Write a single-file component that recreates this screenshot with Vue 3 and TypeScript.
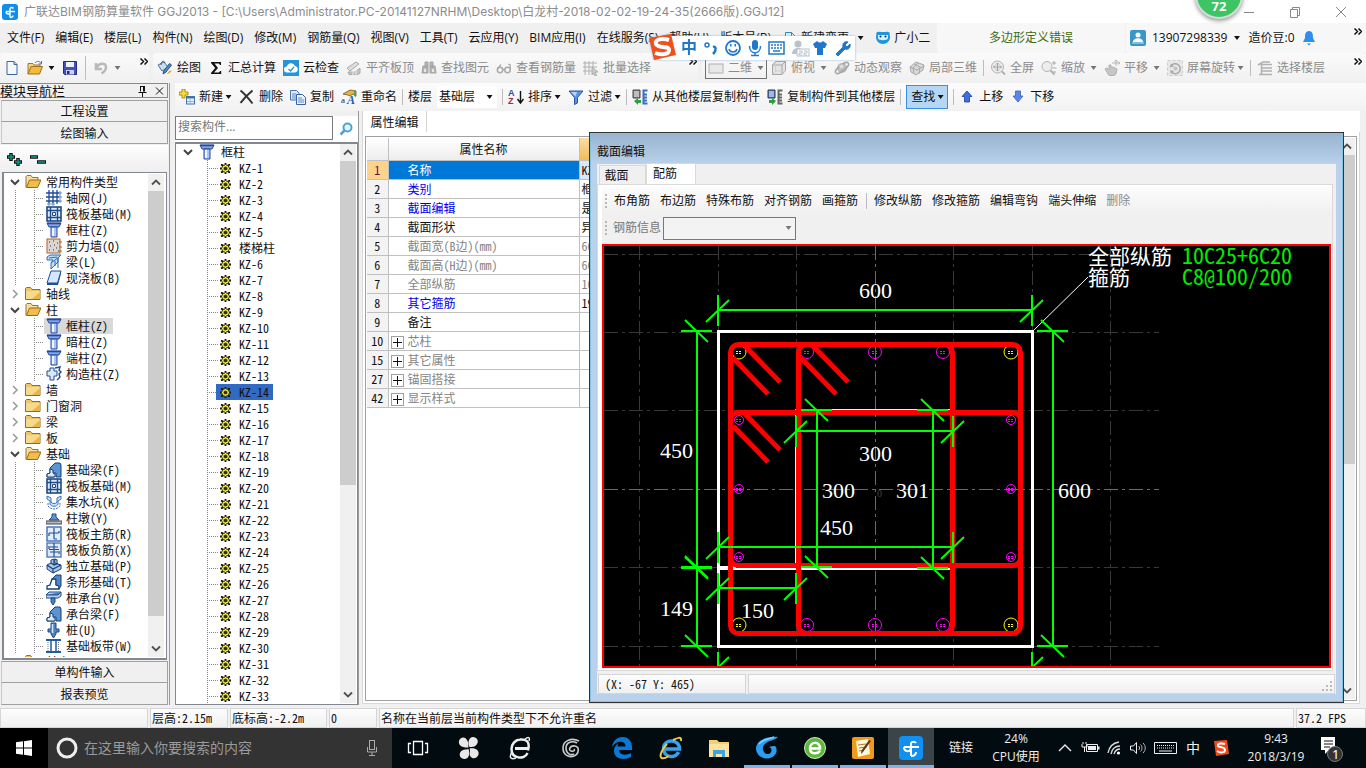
<script setup lang="ts">
import { ref } from 'vue'

interface Tool {
  text?: string
  icon?: string
  arrow?: boolean
  tight?: boolean
  off?: boolean
  sep?: boolean
}
interface TreeNode {
  text: string
  icon: string
  open?: boolean
  children?: { text: string; icon: string }[]
}
interface Prop {
  no: number
  name: string
  value: string
  kind: 'head' | 'blue' | 'black' | 'grey' | 'group'
}

const icons: Record<string, string> = {
  newFile: '<path d="M3 1.500h7l3 3v10H3z" fill="#f4f8fd" stroke="#3c6598"/><path d="M10 1.500v3h3" fill="#b9d0ea" stroke="#3c6598"/>',
  open: '<path d="M1 14V3.500h5l1 1.500h6V7" fill="#f6d57c" stroke="#a07828"/><path d="M1 14l3-7.500h11.500L12.500 14z" fill="#f3b93c" stroke="#9c7021"/><path d="M8 3c2-2.500 5-2 6 .5M14.500 1v3h-3" fill="none" stroke="#4d76a8"/>',
  save: '<path d="M1.500 1.500h13v13h-12l-1-1z" fill="#4650b8" stroke="#252c80"/><path d="M4 2h8v5H4z" fill="#eef2ff"/><path d="M4 10h8v4.500H4z" fill="#c9d2e8"/><path d="M5 11h2.500v3H5z" fill="#252c80"/>',
  undo: '<path d="M3 3v6h6M3.500 8.500C5 3 13 2 13 7c0 3-2 5-4.500 6.500" fill="none" stroke="#b9b9b9" stroke-width="2.500"/>',
  draw: '<path d="M1 5l6-3 4 5-6 4z" fill="#c9dcf0" stroke="#4b6f99"/><path d="M4 5c0-4 3-5 4-2" fill="none" stroke="#456"/><path d="M14.500 5L9 12l-3 2 1-3.500L12.500 3.500z" fill="#4c89d1" stroke="#244f8a"/><path d="M10 14c1.500-4 4-4 5-3-1 0-2 3-5 3z" fill="#f2a92d"/>',
  sigma: '<path d="M3 2h10v3h-1l-1-1.500H6.500L10 8l-4 4.500h5L12.200 11h1v3H3v-1l4.200-5L3 3z" fill="#111"/>',
  cloud: '<rect width="16" height="16" fill="#2594db"/><path d="M4 12.500a3 3 0 0 1 0-6 4.200 4.200 0 0 1 8-.5 3.300 3.300 0 0 1 0 6.500z" fill="#fff"/><path d="M5.500 9l2 2 3.500-4" fill="none" stroke="#2594db" stroke-width="1.300"/>',
  flush: '<path d="M1 8l9-6 3 2-9 7z" fill="#ddd" stroke="#aaa"/><path d="M2 12h7l5-4v5l-2 1.500H3z" fill="#c4c4c4" stroke="#aaa"/><path d="M7 15v-4M10 15v-5" stroke="#eee"/>',
  binoc: '<path d="M4 2h3v5H4zM9 2h3v5H9zM2 6h5v7H1zM9 6h5l1 7H9z" fill="#b5b5b5" stroke="#a2a2a2"/><path d="M7 5h2v4H7z" fill="#c9c9c9"/><path d="M3 9h2v3H3zM11 9h2v3h-2z" fill="#e6e6e6"/>',
  glasses: '<circle cx="4" cy="10" r="2.700" fill="none" stroke="#aaa" stroke-width="1.500"/><circle cx="11.500" cy="10" r="2.700" fill="none" stroke="#aaa" stroke-width="1.500"/><path d="M6.500 9.500h2.500M1.500 9L5 4.500M14.200 9V5l-2-1" fill="none" stroke="#aaa" stroke-width="1.300"/>',
  batch: '<path d="M2 1v14M6 1v14M10 1v9M0 3h14M0 7h14M0 11h9" stroke="#b0b0b0"/><path d="M9 7l6 5-3 .3 1.500 3-1.500.7-1.500-3L9 15z" fill="#c8c8c8" stroke="#a4a4a4" stroke-width=".8"/>',
  rect2d: '<rect x="1" y="4" width="14" height="9" fill="#e8e8e8" stroke="#b0b0b0"/><path d="M2 12.500h12.500" stroke="#ccc"/>',
  cube: '<path d="M1.500 5l3-3.500h10v9l-3.500 4H1.500z" fill="#e4e4e4" stroke="#a5a5a5"/><path d="M1.500 5H11v9.500M11 5l3.500-3.500" fill="none" stroke="#a5a5a5"/><path d="M4.500 2v9M4.500 11L2 14M4.500 11h10" stroke="#cfcfcf"/>',
  orbit: '<circle cx="8" cy="8" r="5" fill="#bcbcbc"/><ellipse cx="8" cy="8" rx="8" ry="3" transform="rotate(-38 8 8)" fill="none" stroke="#a5a5a5" stroke-width="1.400"/><path d="M5 6l3-2 2 3-3 2z" fill="#ddd"/>',
  local3d: '<path d="M1 7l6-5 8 3-1 5-7 5-5-3z" fill="#d8d8d8" stroke="#a9a9a9"/><path d="M5 4l6 3-1 7M9 3L4 8l1 5M1 7l7 3 7-4" fill="none" stroke="#aaa"/>',
  full: '<circle cx="7.500" cy="7" r="6" fill="#ececec" stroke="#b3b3b3"/><path d="M7.500 3v8M3.500 7h8M6 4.500L7.500 3 9 4.500M6 9.500L7.500 11 9 9.500M5 5.500L3.500 7 5 8.500M10 5.500L11.500 7 10 8.500" fill="none" stroke="#a2a2a2"/><path d="M12 11.500l3 3" stroke="#b0b0b0" stroke-width="2"/>',
  zoom: '<circle cx="6" cy="6.500" r="5" fill="#ededed" stroke="#b3b3b3"/><path d="M9.500 10.500l4 4" stroke="#b0b0b0" stroke-width="2"/><path d="M11 3h4M13 1v4M11.500 8h4M12 12h3" stroke="#aaa"/>',
  pan: '<path d="M1 9l2-1 2 2V5h2v3l2-1 2 1 2 1-1 5-2 1.500H5z" fill="#c6c6c6" stroke="#b0b0b0"/><path d="M8 3h8M12 0v6M10.500 1.500L12 0l1.500 1.500M14.500 1.500L16 3l-1.500 1.500" fill="none" stroke="#b5b5b5"/>',
  rotate: '<rect x=".5" y=".5" width="15" height="15" fill="#e8e8e8" stroke="#ccc" stroke-dasharray="3 2"/><path d="M4 6a5 5 0 1 1 1 6.500" fill="none" stroke="#a9a9a9" stroke-width="1.500"/><path d="M2.500 7.500L4 3.500l3 3zM7 11l-3 3-1-4z" fill="#aaa"/><circle cx="8.500" cy="8.500" r="2" fill="#c2c2c2"/>',
  floors: '<path d="M1 5l5-3h7M5 4.500h10M5 8h10M5 11h10M2 14.500h13M4.500 4v10" fill="none" stroke="#b0b0b0" stroke-width="1.500"/>',
  addNew: '<path d="M3 0h3v3h3v3H6v3H3V6H0V3h3z" fill="#f8dc3c" stroke="#8f7a12" stroke-width=".8"/><rect x="7.500" y="7.500" width="8" height="7.500" fill="#e6f0fb" stroke="#4472a8"/><path d="M7.500 8.500h8" stroke="#4472a8" stroke-width="2"/><path d="M8 12.500h7M11 10v5" stroke="#9ab6d6"/>',
  cross: '<path d="M1.500 1.500C6 5 10 10 13.500 14.500M13.500 1.500C8 6 5 9 1.500 14" fill="none" stroke="#333" stroke-width="2"/>',
  copy: '<path d="M.5 1.500h6l2.500 2.500v7H.5z" fill="#dce9f8" stroke="#4672b0"/><path d="M6.500 5.500h6l3 3v7h-9z" fill="#e9f2fc" stroke="#3561a5"/><path d="M8 9h4M8 11h6M8 13h6M2 5h4M2 7h4M2 9h4" stroke="#5e8ac4"/>',
  rename: '<path d="M2 5l7-4 6 1v5l-3-2-3 2-2-1z" fill="#e9b43c" stroke="#6b5619" stroke-width=".8"/><path d="M15 1v7l-2-1V2z" fill="#5a9d4a"/><text x="0" y="14" font-size="9" fill="#222" font-family="Liberation Serif">a</text><text x="6" y="15" font-size="12" font-style="italic" font-weight="bold" fill="#2458b8" font-family="Liberation Serif">A</text>',
  sort: '<text x="0" y="7" font-size="9" font-weight="bold" fill="#2a4fa8" font-family="Liberation Sans">A</text><text x="0" y="15" font-size="9" font-weight="bold" fill="#a02850" font-family="Liberation Sans">Z</text><path d="M12.500 2v11M9.500 10l3 4 3-4" fill="none" stroke="#111" stroke-width="1.400"/>',
  filter: '<path d="M1 2h14L9.500 8.500V14l-3 1.500v-7z" fill="#5a93e0" stroke="#2a56a8"/><path d="M3 3h6L7.500 7.500z" fill="#b5d2f6"/>',
  fromFloor: '<path d="M1 1h7v8H1z" fill="#8c8c8c" stroke="#444"/><path d="M2 3h5M2 5h5M2 7h5" stroke="#eee"/><path d="M15.500 1.500h-4v13h4M12 5.500h3M12 8.500h3M12 11.500h3" fill="none" stroke="#3a6fc0" stroke-width="2"/><path d="M2 12l4-3v2h3v3H6v2z" fill="#2f9e3c"/>',
  toFloor: '<path d="M1 1h7v8H1z" fill="#4f84c8" stroke="#334"/><path d="M2 3h5M2 5h5M2 7h5" stroke="#eef"/><path d="M15.500 1.500h-4v13h4M12 5.500h3M12 8.500h3M12 11.500h3" fill="none" stroke="#666" stroke-width="2"/><path d="M9 12l-4-3v2H2v3h3v2z" fill="#2f9e3c"/>',
  up: '<path d="M8 2l5 5.500h-2.500V13h-5V7.500H3z" fill="#3c6fe0" stroke="#1f3f9c" stroke-width=".8"/>',
  down: '<path d="M5.500 2h5v5H13l-5 6-5-6h2.500z" fill="#5b88e8" stroke="#3c5fc0" stroke-width=".8"/>',
  folder: '<path d="M.5 13.500v-11l1-1h4l1.500 2h8v10z" fill="#f0c666" stroke="#8d6d2b"/><path d="M1 5h14v8H1z" fill="#f6d98c"/><path d="M7 13l8-7v7z" fill="#eab545"/>',
  folderOpen: '<path d="M1 13.500V2.500l1-1h4l1.500 2H13V6" fill="#f6dfa0" stroke="#96722a"/><path d="M1.500 13.500L4.500 6H16l-3.500 7.500z" fill="#f2bd4c" stroke="#94691c"/>',
  axis: '<path d="M3 0v14M7 0v14M11 0v14M0 3h13M0 7h13M0 11h13" stroke="#1f4b9b" stroke-width="1.300"/><path d="M13 2h2v2h-2zM13 6h2v2h-2zM13 10h2v2h-2zM2 13h2v2H2zM6 13h2v2H6z" fill="#fff" stroke="#3c6fc0" stroke-width=".8"/>',
  raft: '<rect x="1" y="1" width="14" height="14" fill="#dfeafa" stroke="#123f77" stroke-width="1.500"/><path d="M4.500 1v14M11.500 1v14M1 4.500h14M1 11.500h14" stroke="#1b4d8c" stroke-width="1.400"/><path d="M6.500 6.500h3v3h-3z" fill="#fff" stroke="#1b4d8c"/>',
  column: '<path d="M1 1h14l-2 4H3z" fill="#7fa6e8" stroke="#24489c"/><path d="M1 1.500h14" stroke="#24489c" stroke-width="1.500"/><path d="M5 5h6v10H5z" fill="#a9c5f4" stroke="#24489c"/><path d="M6 6h2v8H6z" fill="#eef5ff"/>',
  wall: '<rect x="1" y="1" width="13" height="14" fill="#ddd6d0" stroke="#b0602a"/><path d="M3 4h1M7 3h1M11 5h1M4 8h1M8 7h1M10 10h1M3 12h1M7 12h1M12 13h1" stroke="#333" stroke-width="1.200"/><path d="M13 4h3M13 9h3M13 13h3" stroke="#b0602a"/>',
  beam: '<path d="M1 3l3-2h11l-3 3v4l-7 7V9l2-3H1z" fill="#c7e0f8" stroke="#2a6bb5"/><path d="M3 4l8-1M5 9l8-6M9 12V7M12 14V4" stroke="#2a6bb5"/>',
  slab: '<path d="M5 1h10l-3.500 12H1z" fill="#d6e6fb" stroke="#1c4fa0"/><path d="M1 13h10.500L15 1v2.500L12 15H1z" fill="#1c4fa0"/>',
  struct: '<path d="M4 2h4v3h3v5H8v4H4v-4H1V5h3z" fill="#d9e7fb" stroke="#234c8f"/><path d="M9 2l5-1-1 3 2 2-2 2 1 3-3 3" fill="none" stroke="#234c8f" stroke-width="1.400"/>',
  fbeam: '<path d="M1 15v-3l3-1V6l5-5h5l1 2v12h-5v-4H8v4z" fill="#5b94d2" stroke="#163f74"/><path d="M1 15v-3l3-1V7l3 1v3l2 1v3z" fill="#d8e8fa" stroke="#163f74"/>',
  pit: '<path d="M1 2v3l3 2v3c1 3 7 3 8 0V7l3-2V2l-4 2v4c-1 2-5 2-6 0V4z" fill="#cfe2f7" stroke="#3a72b8"/><path d="M2 9v3c3 4 9 4 12 0V9" fill="none" stroke="#3a72b8" stroke-dasharray="2 1"/>',
  pier: '<path d="M6 4h4v3l3 3H3l3-3z" fill="#5f93d6" stroke="#204a88"/><path d="M0 11h16v3H0z" fill="#b8b8b8" stroke="#444"/>',
  mainBar: '<rect x="1" y="1" width="14" height="14" fill="#e2eefc" stroke="#2f66b8" stroke-width="1.300"/><path d="M8 2v11M3 7h10M3 7v3M13 7V5M8 13h3" fill="none" stroke="#1f4f9e" stroke-width="1.200"/>',
  negBar: '<rect x="1" y="1" width="14" height="14" fill="#dfe9f6" stroke="#4a6fa8" stroke-width="1.300"/><path d="M8 1v14M4 5h8M4 10h8M3 4v3M13 9v3M3 7.500h10" fill="none" stroke="#1f4f9e" stroke-width="1.200"/>',
  isolated: '<path d="M1 7l4-2V2l4-1v4l6 2v4l-8 4-6-4z" fill="#a7c6ea" stroke="#163f74"/><path d="M1 7l6 4 8-4M7 11v4M5 5l3 2V2M9 1l2 1v4l-3 1" fill="none" stroke="#163f74" stroke-width="1.200"/>',
  strip: '<path d="M1 15v-3l3-1 2-6h4v6l3 1v3z" fill="#fff" stroke="#163f74" stroke-width="1.300"/><path d="M6 5l4-4h5v11l-2 3v-3l-3-1V5z" fill="#4f86c6" stroke="#163f74"/>',
  cap: '<path d="M0 5l3-3h12v4l-3 2H0z" fill="#b7d2f0" stroke="#1b4a86"/><path d="M0 5h12l3-3M5 8h4v4l-2 3-2-3z" fill="#4e80c0" stroke="#1b4a86"/>',
  pile: '<path d="M5 1h5v6h3v3h-3v2l-2.500 4L5 12v-2H2V7h3z" fill="#4f83c4" stroke="#1b4a86"/><path d="M6.500 2v9" stroke="#d8e8fa" stroke-width="1.500"/>',
  band: '<path d="M0 2h15M0 14h15" stroke="#1f5aa8" stroke-width="1.800"/><path d="M5 2v12M10 2v12" stroke="#1f5aa8" stroke-width="1.500"/><path d="M2 4v9M12.500 4v9" stroke="#777" stroke-dasharray="1 1"/>',
  gear: '<path d="M5 0h2v2h2V1h2v2h-1v2h2v2h-2v2h1v2H9v-1H7v2H5v-2H3v1H1V9h1V7H0V5h2V3H1V1h2v1h2z" fill="#111"/><path d="M5 2h2v2H5zM5 8h2v2H5zM2 5h2v2H2zM8 5h2v2H8zM3 3h2v2H3zM7 3h2v2H7zM3 7h2v2H3zM7 7h2v2H7z" fill="#f3ec2c"/><path d="M5 5h2v2H5z" fill="#333"/>',
}

const menus = ['文件(F)', '编辑(E)', '楼层(L)', '构件(N)', '绘图(D)', '修改(M)', '钢筋量(Q)', '视图(V)', '工具(T)', '云应用(Y)', 'BIM应用(I)', '在线服务(S)', '帮助(H)', '版本号(B)']

const drawTools: Tool[] = [
  { text: '绘图', icon: 'draw' },
  { text: '汇总计算', icon: 'sigma' },
  { text: '云检查', icon: 'cloud' },
  { text: '平齐板顶', icon: 'flush', off: true },
  { text: '查找图元', icon: 'binoc', off: true },
  { text: '查看钢筋量', icon: 'glasses', off: true },
  { text: '批量选择', icon: 'batch', off: true },
]
const viewTools: Tool[] = [
  { text: '俯视', icon: 'cube', arrow: true, off: true },
  { text: '动态观察', icon: 'orbit', off: true },
  { text: '局部三维', icon: 'local3d', off: true },
  { sep: true },
  { text: '全屏', icon: 'full', off: true },
  { text: '缩放', icon: 'zoom', arrow: true, off: true },
  { text: '平移', icon: 'pan', arrow: true, off: true },
  { text: '屏幕旋转', icon: 'rotate', arrow: true, tight: true, off: true },
  { sep: true },
  { text: '选择楼层', icon: 'floors', off: true },
]
const editTools: Tool[] = [
  { text: '新建', icon: 'addNew', arrow: true, tight: true },
  { text: '删除', icon: 'cross' },
  { text: '复制', icon: 'copy' },
  { text: '重命名', icon: 'rename' },
  { sep: true },
]
const orderTools: Tool[] = [
  { sep: true },
  { text: '排序', icon: 'sort', arrow: true, tight: true },
  { text: '过滤', icon: 'filter', arrow: true, tight: true },
  { sep: true },
  { text: '从其他楼层复制构件', icon: 'fromFloor' },
  { text: '复制构件到其他楼层', icon: 'toFloor' },
  { sep: true },
]
const moveTools: Tool[] = [
  { sep: true },
  { text: '上移', icon: 'up' },
  { text: '下移', icon: 'down' },
]

const tree: TreeNode[] = [
  {
    text: '常用构件类型', icon: 'folderOpen', open: true,
    children: [
      { text: '轴网(J)', icon: 'axis' },
      { text: '筏板基础(M)', icon: 'raft' },
      { text: '框柱(Z)', icon: 'column' },
      { text: '剪力墙(Q)', icon: 'wall' },
      { text: '梁(L)', icon: 'beam' },
      { text: '现浇板(B)', icon: 'slab' },
    ],
  },
  { text: '轴线', icon: 'folder' },
  {
    text: '柱', icon: 'folderOpen', open: true,
    children: [
      { text: '框柱(Z)', icon: 'column' },
      { text: '暗柱(Z)', icon: 'column' },
      { text: '端柱(Z)', icon: 'column' },
      { text: '构造柱(Z)', icon: 'struct' },
    ],
  },
  { text: '墙', icon: 'folder' },
  { text: '门窗洞', icon: 'folder' },
  { text: '梁', icon: 'folder' },
  { text: '板', icon: 'folder' },
  {
    text: '基础', icon: 'folderOpen', open: true,
    children: [
      { text: '基础梁(F)', icon: 'fbeam' },
      { text: '筏板基础(M)', icon: 'raft' },
      { text: '集水坑(K)', icon: 'pit' },
      { text: '柱墩(Y)', icon: 'pier' },
      { text: '筏板主筋(R)', icon: 'mainBar' },
      { text: '筏板负筋(X)', icon: 'negBar' },
      { text: '独立基础(P)', icon: 'isolated' },
      { text: '条形基础(T)', icon: 'strip' },
      { text: '桩承台(V)', icon: 'cap' },
      { text: '承台梁(F)', icon: 'fbeam' },
      { text: '桩(U)', icon: 'pile' },
      { text: '基础板带(W)', icon: 'band' },
    ],
  },
  { text: '其它', icon: 'folder' },
]

const range = (from: number, to: number) => Array.from({ length: to - from + 1 }, (_, i) => `KZ-${from + i}`)
const members = [...range(1, 5), '楼梯柱', ...range(6, 33)]
const current = ref('KZ-14')
const keyword = ref('')

const props: Prop[] = [
  { no: 1, name: '名称', value: 'KZ-14', kind: 'head' },
  { no: 2, name: '类别', value: '框架柱', kind: 'blue' },
  { no: 3, name: '截面编辑', value: '是', kind: 'blue' },
  { no: 4, name: '截面形状', value: '异形', kind: 'black' },
  { no: 5, name: '截面宽(B边)(mm)', value: '600', kind: 'grey' },
  { no: 6, name: '截面高(H边)(mm)', value: '600', kind: 'grey' },
  { no: 7, name: '全部纵筋', value: '10', kind: 'grey' },
  { no: 8, name: '其它箍筋', value: '195', kind: 'blue' },
  { no: 9, name: '备注', value: '', kind: 'black' },
  { no: 10, name: '芯柱', value: '', kind: 'group' },
  { no: 15, name: '其它属性', value: '', kind: 'group' },
  { no: 27, name: '锚固搭接', value: '', kind: 'group' },
  { no: 42, name: '显示样式', value: '', kind: 'group' },
]

const barToolsA = ['布角筋', '布边筋', '特殊布筋', '对齐钢筋', '画箍筋']
const barToolsB = ['修改纵筋', '修改箍筋', '编辑弯钩', '端头伸缩']

/* Section drawing */
const gridX = [639, 718, 796, 953, 1032, 1110]
const gridY = [254, 332, 410, 567, 646]
const rebars = [
  { r: 7, color: '#ffff00', at: [[739, 352], [1011, 352], [739, 625], [1011, 625]] },
  { r: 6.5, color: '#ff00ff', at: [[807, 352], [875, 352], [943, 352], [807, 625], [875, 625], [943, 625]] },
  { r: 4.5, color: '#ff00ff', at: [[739, 420], [739, 489], [739, 557], [1011, 420], [1011, 489], [1011, 557]] },
]
const mark = (x: number, y: number) => `M${x - 3} ${y - 0.5}h2m1 0h2M${x - 3} ${y + 1.5}h2m1 0h2`
const hooks = [[0, 0], [68, 0], [0, 68]]

const hDim = (x1: number, x2: number, y: number) =>
  `M${x1} ${y}H${x2}` + [x1, x2].map(x => `M${x} ${y - 15}v31M${x - 12} ${y + 12}l23 -22`).join('')
const vDim = (y1: number, y2: number, x: number) =>
  `M${x} ${y1}V${y2}` + [y1, y2].map(y => `M${x - 16} ${y}h31M${x - 12} ${y - 11}l23 22`).join('')
const dims = [
  hDim(718, 1032, 310), hDim(796, 953, 431), hDim(718, 953, 547), hDim(718, 796, 588), hDim(718, 1032, 667),
  vDim(331, 567, 697), vDim(568, 646, 697), vDim(331, 646, 1053), vDim(410, 567, 817), vDim(410, 568, 933),
]
const dimTexts: [number, number, string][] = [
  [859, 298, '600'], [660, 458, '450'], [859, 461, '300'], [822, 498, '300'], [896, 498, '301'],
  [820, 535, '450'], [660, 616, '149'], [741, 618, '150'], [1058, 498, '600'],
]
</script>

<template>
  <div class="app">
    <header class="title">
      <svg class="logo" viewBox="0 0 16 16"><rect width="16" height="16" rx="3" fill="#0d8eea" /><path d="M8 13.500V4.500a2 2 0 0 1 3.500 0M4 7.500h9M4 7.500c0 3 4 3.500 4 .5M8 13.500c2 0 3-1 3-2" fill="none" stroke="#fff" stroke-width="1.400" /></svg>
      <h1>广联达BIM钢筋算量软件 GGJ2013 - [C:\Users\Administrator.PC-20141127NRHM\Desktop\白龙村-2018-02-02-19-24-35(2666版).GGJ12]</h1>
      <div class="winctl">
        <button type="button" aria-label="最小化"><svg viewBox="0 0 12 12"><path d="M1 6.500h10" stroke="#888" /></svg></button>
        <button type="button" aria-label="还原"><svg viewBox="0 0 12 12"><path d="M1.500 3.500h7v8h-7zM3.500 3.500v-2h7v8h-2" fill="none" stroke="#888" /></svg></button>
        <button type="button" aria-label="关闭"><svg viewBox="0 0 12 12"><path d="M1 1l10 10M11 1L1 11" stroke="#888" /></svg></button>
      </div>
    </header>

    <nav class="menubar">
      <div class="menus">
        <button v-for="m in menus" :key="m" type="button">{{ m }}</button>
        <button type="button" class="withicon"><svg class="ic" viewBox="0 0 16 16"><path d="M3.500 2.500h6l4 4v8h-10z" fill="#e3f1fb" stroke="#2e86c1" /><path d="M9.500 2.500v4h4" fill="none" stroke="#2e86c1" /></svg>新建变更<i class="caret wide"></i></button>
        <button type="button" class="withicon"><svg class="ic" viewBox="0 0 16 16"><path d="M1 3c2-2 4-1 7-1s5-1 7 1c-1 1 0 2 0 4 0 4-3 7-7 7S1 11 1 7c0-2 1-3 0-4z" fill="#1d95e0" /><path d="M3 5h10v3c0 3-10 3-10 0z" fill="#d7effc" /><circle cx="5.500" cy="6.500" r="1" fill="#134" /><circle cx="10.500" cy="6.500" r="1" fill="#134" /></svg>广小二</button>
      </div>
      <div class="notice">多边形定义错误</div>
      <div class="account">
        <svg class="ic" viewBox="0 0 16 16"><rect width="16" height="16" rx="2" fill="#3a96c9" /><circle cx="8" cy="5" r="2.500" fill="#fff" /><path d="M3 12c0-5 10-5 10 0z" fill="#fff" /><path d="M2 13h12" stroke="#cfe8f5" /></svg>
        <button type="button">13907298339</button><i class="caret"></i>
        <button type="button" class="bean">造价豆:0</button>
        <svg class="ic" viewBox="0 0 16 16"><path d="M8 1c4 0 4 4 4 7l2 4H2l2-4c0-3 0-7 4-7z" fill="#2e8ff0" /><path d="M6 13.500h4L8 15.500z" fill="#2e8ff0" /></svg>
        <svg class="more" viewBox="0 0 8 7"><path d="M.5.5l3 3-3 3M4.500.5l3 3-3 3" /></svg>
      </div>
    </nav>

    <div class="toolbar main">
      <div class="seg files">
        <button type="button" aria-label="新建工程"><svg class="ic" viewBox="0 0 16 16" v-html="icons.newFile"></svg></button>
        <button type="button" aria-label="打开"><svg class="ic" viewBox="0 0 16 16" v-html="icons.open"></svg><i class="caret"></i></button>
        <button type="button" aria-label="保存"><svg class="ic" viewBox="0 0 16 16" v-html="icons.save"></svg></button>
        <span class="sep tall"></span>
        <button type="button" class="off" aria-label="撤销"><svg class="ic" viewBox="0 0 16 16" v-html="icons.undo"></svg><i class="caret"></i></button>
        <svg class="more" viewBox="0 0 8 7"><path d="M.5.5l3 3-3 3M4.500.5l3 3-3 3" /></svg>
      </div>
      <div class="seg draws">
        <button v-for="t in drawTools" :key="t.text" type="button" class="tool" :class="{ off: t.off }"><svg class="ic" viewBox="0 0 16 16" v-html="icons[t.icon!]"></svg>{{ t.text }}</button>
        <svg class="more" viewBox="0 0 8 7"><path d="M.5.5l3 3-3 3M4.500.5l3 3-3 3" /></svg>
      </div>
      <div class="seg views">
        <button type="button" class="tool off dim2"><svg class="ic" viewBox="0 0 16 16" v-html="icons.rect2d"></svg>二维<i class="caret"></i></button>
        <template v-for="(t, i) in viewTools" :key="i">
          <span v-if="t.sep" class="sep"></span>
          <button v-else type="button" class="tool" :class="{ off: t.off, tight: t.tight }"><svg class="ic" viewBox="0 0 16 16" v-html="icons[t.icon!]"></svg>{{ t.text }}<i v-if="t.arrow" class="caret"></i></button>
        </template>
        <svg class="more" viewBox="0 0 8 7"><path d="M.5.5l3 3-3 3M4.500.5l3 3-3 3" /></svg>
      </div>
    </div>

    <div class="body">
      <aside class="nav">
        <div class="navhead">
          <span>模块导航栏</span>
          <svg viewBox="0 0 30 12"><path d="M3 1.500h5M3.500 1.500v5M7.500 1.500v5M6.500 1.500v5M1.500 7.500h8M5.500 8v4" stroke="#111" fill="none" /><path d="M19 2.500l7 7M26 2.500l-7 7" stroke="#111" /></svg>
        </div>
        <button type="button" class="mod">工程设置</button>
        <button type="button" class="mod">绘图输入</button>
        <div class="pm">
          <svg viewBox="0 0 40 16"><path d="M5 1v8M1 5h8M12 6v8M8 10h8M24 5h8M31 10h9" stroke="#111" stroke-width="3.500" /><path d="M5 2v6M2 5h6M12 7v6M9 10h6M25 5h6M32 10h7" stroke="#0b9a8d" stroke-width="1.500" /></svg>
        </div>
        <div class="treebox">
          <ul class="tree" role="tree">
            <li v-for="n in tree" :key="n.text" role="treeitem">
              <div class="node">
                <svg class="chev" viewBox="0 0 10 10"><path v-if="n.open" d="M1 3l4 4 4-4" stroke="#444" stroke-width="2" fill="none" /><path v-else d="M3 1l4 4-4 4" stroke="#999" stroke-width="1.500" fill="none" /></svg>
                <svg class="ic" viewBox="0 0 16 16" v-html="icons[n.icon]"></svg><span>{{ n.text }}</span>
              </div>
              <ul v-if="n.children" role="group">
                <li v-for="c in n.children" :key="c.text" class="leaf" role="treeitem">
                  <div class="pick" :class="{ on: n.text === '柱' && c.text === '框柱(Z)' }"><svg class="ic" viewBox="0 0 16 16" v-html="icons[c.icon]"></svg><span>{{ c.text }}</span></div>
                </li>
              </ul>
            </li>
          </ul>
          <div class="sb"><svg viewBox="0 0 10 10"><path d="M1 7l4-4 4 4" /></svg><i class="t1"></i><svg viewBox="0 0 10 10"><path d="M1 3l4 4 4-4" /></svg></div>
        </div>
        <button type="button" class="mod">单构件输入</button>
        <button type="button" class="mod">报表预览</button>
      </aside>

      <div class="work">
        <div class="toolbar edit">
          <template v-for="(t, i) in editTools" :key="i">
            <span v-if="t.sep" class="sep"></span>
            <button v-else type="button" class="tool" :class="{ tight: t.tight }"><svg class="ic" viewBox="0 0 16 16" v-html="icons[t.icon!]"></svg>{{ t.text }}<i v-if="t.arrow" class="caret"></i></button>
          </template>
          <label class="floor">楼层<span class="selwrap"><select><option>基础层</option></select><i class="caret"></i></span></label>
          <template v-for="(t, i) in orderTools" :key="i">
            <span v-if="t.sep" class="sep"></span>
            <button v-else type="button" class="tool" :class="{ tight: t.tight }"><svg class="ic" viewBox="0 0 16 16" v-html="icons[t.icon!]"></svg>{{ t.text }}<i v-if="t.arrow" class="caret"></i></button>
          </template>
          <button type="button" class="tool tight find">查找<i class="caret"></i></button>
          <template v-for="(t, i) in moveTools" :key="i">
            <span v-if="t.sep" class="sep"></span>
            <button v-else type="button" class="tool"><svg class="ic" viewBox="0 0 16 16" v-html="icons[t.icon!]"></svg>{{ t.text }}</button>
          </template>
        </div>

        <div class="panes">
          <section class="members">
            <div class="search">
              <input v-model="keyword" type="text" placeholder="搜索构件..." aria-label="搜索构件">
              <button type="button" aria-label="搜索"><svg viewBox="0 0 14 14"><circle cx="8.500" cy="5.500" r="4" fill="#e8f6ff" stroke="#4aa3e0" stroke-width="2" /><path d="M5.500 8.500L1.500 12.500" stroke="#4aa3e0" stroke-width="2.500" /></svg></button>
            </div>
            <div class="listbox">
              <ul class="list" role="tree">
                <li class="root"><svg class="chev" viewBox="0 0 10 10"><path d="M1 3l4 4 4-4" stroke="#444" stroke-width="2" fill="none" /></svg><svg class="ic" viewBox="0 0 16 16" v-html="icons.column"></svg><span>框柱</span></li>
                <li v-for="m in members" :key="m" class="kz" role="treeitem" @click="current = m">
                  <div class="kzpick" :class="{ on: m === current }"><svg class="gear" viewBox="0 0 12 12" v-html="icons.gear"></svg><span>{{ m }}</span></div>
                </li>
              </ul>
              <div class="sb"><svg viewBox="0 0 10 10"><path d="M1 7l4-4 4 4" /></svg><i class="t2"></i><svg viewBox="0 0 10 10"><path d="M1 3l4 4 4-4" /></svg></div>
            </div>
          </section>

          <section class="props">
            <div class="tabs"><button type="button" class="tab">属性编辑</button></div>
            <div class="sheet">
              <div class="tablewrap">
                <table>
                  <colgroup><col class="c1"><col class="c2"><col></colgroup>
                  <thead><tr><th></th><th>属性名称</th><th class="val"></th></tr></thead>
                  <tbody>
                    <tr v-for="p in props" :key="p.no" :class="p.kind">
                      <th scope="row">{{ p.no }}</th>
                      <td><button v-if="p.kind === 'group'" type="button" class="plus" :aria-label="'展开' + p.name"><svg viewBox="0 0 9 9"><path d="M0 4.500h9M4.500 0v9" stroke="#111" /></svg></button>{{ p.name }}</td>
                      <td>{{ p.value }}</td>
                    </tr>
                  </tbody>
                </table>
                <div class="sb"><svg viewBox="0 0 10 10"><path d="M1 7l4-4 4 4" /></svg><i class="t3"></i><svg viewBox="0 0 10 10"><path d="M1 3l4 4 4-4" /></svg></div>
              </div>
            </div>
          </section>
        </div>
      </div>
    </div>

    <footer class="status">
      <span class="s1"></span><span class="s2">层高:2.15m</span><span class="s3">底标高:-2.2m</span><span class="s4">0</span><span class="s5">名称在当前层当前构件类型下不允许重名</span><span class="s6">37.2 FPS</span>
    </footer>

    <div class="taskbar">
      <button type="button" class="start" aria-label="开始"><svg viewBox="0 0 16 16"><path d="M0 2.300L7 1.300v6.200H0zM8 1.200L16 0v7.500H8zM0 8.500h7v6.200l-7-1zM8 8.500h8V16l-8-1.200z" fill="#fff" /></svg></button>
      <label class="cortana">
        <svg viewBox="0 0 22 22"><circle cx="11" cy="11" r="9" fill="none" stroke="#eee" stroke-width="3" /></svg>
        <input type="text" placeholder="在这里输入你要搜索的内容">
        <svg class="mic" viewBox="0 0 12 18"><rect x="3.500" y="1.500" width="5" height="9" fill="none" stroke="#aaa" /><path d="M1.500 8v5h9V8M6 13v3.500M3 16.500h6" fill="none" stroke="#aaa" /></svg>
      </label>
      <div class="pins">
        <button type="button" aria-label="任务视图"><svg viewBox="0 0 24 24"><path d="M7.500 5.500h9v13h-9zM5 7.500H2.500v9H5M19 7.500h2.500v9H19" fill="none" stroke="#fff" stroke-width="1.300" /></svg></button>
        <button type="button" aria-label="风扇"><svg viewBox="0 0 24 24"><g fill="#e8e8e8"><path d="M11.500 11.500C5 12 1 9 2 5s6-5 8-1 1 4 1.500 7.500z" /><path d="M12.500 11C10 7 12 1 16 1s6 4 4 7-4 3-7.500 3z" /><path d="M12.500 12.500c6-1 10 2 9 6s-6 5-8 2 .5-4-1-8z" /><path d="M11.500 13c2 5 0 10-4 10s-6-4-4-7 5-2 8-3z" /></g></svg></button>
        <button type="button" aria-label="浏览器"><svg viewBox="0 0 24 24"><path d="M20 14.500C23 4 16 3 12 3.500 7 4 3.500 8 3.500 13c0 10 13 11 16 4" fill="none" stroke="#eee" stroke-width="2.500" /><path d="M7 12.500h14" stroke="#eee" stroke-width="3" /><path d="M17 3c4-3 5-1 4 2M4 16c-3 5-2 8 4 6" fill="none" stroke="#eee" stroke-width="1.500" /></svg></button>
        <button type="button" aria-label="漩涡"><svg viewBox="0 0 24 24"><path d="M20 5C12 1 4 5 4 12s6 10 11 8 6-9 1-10-7 4-4 5 4-1 3-2M18 7c-6-3-11 0-11 5s4 8 8 6" fill="none" stroke="#ccc" stroke-width="1.600" /></svg></button>
        <button type="button" aria-label="Edge"><svg viewBox="0 0 24 24"><path d="M2 11C3 4 8 1 12.500 1 19 1 22 6 22 11v3H9c0 5 7 6 12 3v4c-7 4-17 2-17-6 0-4 2-6 5-8-1 1-1.500 2-1.500 3.500h8C16 4 6 4 2 11z" fill="#0a78d7" /></svg></button>
      </div>
      <div class="runs">
        <button type="button" aria-label="Internet Explorer"><svg viewBox="0 0 24 24"><path d="M6 13h14.500C21 3 5 2 4.500 12.500 5 22.500 17 22.500 19.500 16" fill="none" stroke="#3aa0ea" stroke-width="3.500" /><path d="M22 5c1-5-4-3-8-1M8 8C3 13 0 20 2.500 22c2 1 5-.5 7-2" fill="none" stroke="#f3c93a" stroke-width="2" /></svg></button>
        <button type="button" aria-label="文件资源管理器"><svg viewBox="0 0 24 24"><path d="M2 4h8l2 2h10v15H2z" fill="#f2cf73" /><path d="M2 8h20v13H2z" fill="#fbe39f" /><path d="M6 14h12v7h-3v-3H9v3H6z" fill="#3aa5e6" /></svg></button>
        <button type="button" class="run" aria-label="广联达G"><svg viewBox="0 0 24 24"><path d="M23 1C14 0 2 3 1 12c0 8 8 12 14 10 7-2 8-9 5-12-2 0-4 0-6 1 4 1 3 7-1 7-5 0-7-7-3-10 4-4 9-3 13-7z" fill="#2b9df0" /><path d="M4 8c4-5 10-5 15-7" fill="none" stroke="#7cd0ff" stroke-width="1.500" /></svg></button>
        <button type="button" class="run" aria-label="360浏览器"><svg viewBox="0 0 24 24"><circle cx="12" cy="12" r="10.500" fill="#5cb83a" stroke="#cfeebb" /><path d="M7 12.500h10c0-8-10-7-10 0 0 6 8 6 10 2" fill="none" stroke="#fff" stroke-width="2.500" /></svg></button>
        <button type="button" class="run" aria-label="记事"><svg viewBox="0 0 24 24"><rect x="1" y="1" width="22" height="22" rx="2" fill="#f09a1c" /><path d="M5 5l12-2 2 15-12 3z" fill="#fff6dc" /><path d="M7 9l8-1M8 12l8-1M8 15l5-1" stroke="#b07a30" /><path d="M20 5l-8 11-2 2 .5-3.500L18 4z" fill="#5a3b1c" /></svg></button>
        <button type="button" class="run active" aria-label="广联达算量"><svg viewBox="0 0 24 24"><rect width="24" height="24" rx="4" fill="#1090f2" /><path d="M12 20V7a3 3 0 0 1 5 0M5 11h15M5 11c0 5 7 6 7 0M12 20c3 0 5-1 5-4" fill="none" stroke="#fff" stroke-width="2" /></svg></button>
      </div>
      <div class="tray">
        <span class="link">链接</span>
        <span class="cpu">24%<br>CPU使用</span>
        <svg class="w26" viewBox="0 0 26 20"><path d="M7 13l6-6 6 6" fill="none" stroke="#eee" stroke-width="1.400" /></svg>
        <svg class="w24" viewBox="0 0 24 20"><path d="M8.500 6.500h11v7h-11z" fill="none" stroke="#eee" /><path d="M10 8h8v4h-8zM20 8.500h1.500v3H20z" fill="#eee" /><path d="M4 6v3h5V6M5 4v2M8 4v2M6.500 9v5" fill="none" stroke="#eee" /></svg>
        <svg class="w24" viewBox="0 0 24 20"><path d="M6 15C7 9 11 5 17 4M9 16c1-5 4-8 9-8M12 16c1-3 3-5 6-5" fill="none" stroke="#ddd" stroke-width="1.300" /><circle cx="16.500" cy="15" r="1.600" fill="#fff" /></svg>
        <svg class="w24" viewBox="0 0 24 20"><path d="M4.500 8h3l3-3.500v11l-3-3.500h-3z" fill="none" stroke="#eee" /><path d="M12.500 8c1.500 1 1.500 3 0 4M14.500 6.500c2 2 2 5 0 7M17 5c3 3 3 7 0 10" fill="none" stroke="#bbb" /></svg>
        <svg class="w30" viewBox="0 0 30 20"><path d="M4.500 4.500h22v11h-22z" fill="none" stroke="#eee" /><path d="M7 7.500h17M7 10h17" stroke="#eee" stroke-dasharray="1 1" /><path d="M9 13h13" stroke="#eee" /></svg>
        <span class="w26 zh">中</span>
        <svg class="w30" viewBox="0 0 30 20"><path d="M8 3l13-1 2 14-13 2z" fill="#ee4a1d" /><path d="M19 6c-3-1-8-1-7 2 1 2 7 0 7 4 0 3-5 3-8 1" fill="none" stroke="#fff" stroke-width="2" /></svg>
        <time class="clock">9:43<br>2018/3/19</time>
        <svg class="note" viewBox="0 0 34 34"><path d="M5 6h14v13h-6l-4 4v-4H5z" fill="#fff" /><path d="M8 10h9M8 13h9M8 16h6" stroke="#111" /><circle cx="19" cy="23" r="7.500" fill="#333" stroke="#777" /><text x="16" y="28" font-size="13" fill="#fff" font-family="Noto Sans">1</text></svg>
      </div>
    </div>

    <section class="dialog" role="dialog" aria-label="截面编辑">
      <h2>截面编辑</h2>
      <div class="dlgbody">
        <div class="dtabs"><button type="button">截面</button><button type="button" class="on">配筋</button></div>
        <div class="page">
          <div class="dbar">
            <i class="grip"></i>
            <button v-for="b in barToolsA" :key="b" type="button">{{ b }}</button>
            <span class="sep"></span>
            <button v-for="b in barToolsB" :key="b" type="button">{{ b }}</button>
            <button type="button" class="off">删除</button>
          </div>
          <div class="dbar second">
            <i class="grip"></i>
            <label>钢筋信息<span class="selwrap"><select><option></option></select><i class="caret"></i></span></label>
          </div>
          <div class="canvas">
            <svg viewBox="604 246 726 420" preserveAspectRatio="xMinYMin slice">
              <g stroke="#383838" stroke-dasharray="14 4 3 4" fill="none">
                <path v-for="x in gridX" :key="x" :d="`M${x}.5 246V666`" />
                <path v-for="y in gridY" :key="y" :d="`M604 ${y}.5H1159`" />
                <path d="M875.500 246V666M604 489.500H1159" stroke="#6a6a6a" />
              </g>
              <g v-for="g in rebars" :key="g.r" fill="none" :stroke="g.color">
                <template v-for="(b, i) in g.at" :key="i"><circle :cx="b[0]" :cy="b[1]" :r="g.r" /><path :d="mark(b[0], b[1])" /></template>
              </g>
              <g fill="none" stroke="#fff">
                <rect x="718.500" y="331.500" width="314" height="315" stroke-width="3" />
                <path d="M795.500 569V409.500H953" /><path d="M720 569H953" stroke-width="2" /><path d="M718 568h18" stroke-width="4" />
                <path d="M1034 330L1088 277" />
              </g>
              <g fill="none" stroke="#f00" stroke-width="5">
                <rect x="730.500" y="344.500" width="290" height="289" rx="8" />
                <rect x="798.500" y="344.500" width="154" height="289" rx="8" />
                <rect x="730.500" y="412.500" width="290" height="153" rx="8" />
                <path v-for="(k, i) in hooks" :key="i" :d="`M${745 + k[0]} ${346 + k[1]}l35 36M${733 + k[0]} ${358 + k[1]}l35 36`" />
              </g>
              <g fill="none" stroke="#0f0" stroke-width="2"><path v-for="(d, i) in dims" :key="i" :d="d" /></g>
              <g class="num"><text v-for="(t, i) in dimTexts" :key="i" :x="t[0]" :y="t[1]">{{ t[2] }}</text></g>
              <text class="origin" x="877" y="497">0</text>
              <g class="note-text">
                <text x="1088" y="264">全部纵筋</text><text x="1088" y="285">箍筋</text>
                <text class="g" x="1182" y="264">10C25+6C20</text><text class="g" x="1182" y="285">C8@100/200</text>
              </g>
            </svg>
          </div>
        </div>
        <div class="dstatus"><span class="d1">(X: -67 Y: 465)</span><span class="d2"><svg viewBox="0 0 12 12"><path d="M9 1h2v2H9zM9 5h2v2H9zM5 5h2v2H5zM9 9h2v2H9zM5 9h2v2H5zM1 9h2v2H1z" fill="#bbb" /></svg></span></div>
      </div>
    </section>

    <div class="ime">
      <svg viewBox="0 0 206 28">
        <path d="M0 5l22-4 5 21-22 5z" fill="#f0501c" /><path d="M20 7C14 5 5 6 7 11s13 1 13 6-9 5-14 3" fill="none" stroke="#fff" stroke-width="4" />
        <text x="32" y="20" font-size="16" font-weight="bold" fill="#1f78cc" font-family="Noto Sans CJK SC">中</text>
        <circle cx="58" cy="12" r="2" fill="none" stroke="#1f78cc" stroke-width="1.500" /><path d="M64 14c3-1 4 3 0 7" fill="none" stroke="#1f78cc" stroke-width="2.500" />
        <circle cx="84" cy="15" r="7" fill="none" stroke="#1f78cc" stroke-width="1.800" /><path d="M80 16c1 4 7 4 8 0" fill="none" stroke="#1f78cc" stroke-width="1.500" /><path d="M81 11h1.500v2.500H81zM85.500 11H87v2.500h-1.500z" fill="#1f78cc" />
        <rect x="103" y="7" width="6" height="10" rx="3" fill="#1f78cc" /><path d="M100.500 13c0 9 11 9 11 0M106 19v3M102 22.500h8" fill="none" stroke="#1f78cc" stroke-width="1.500" />
        <rect x="120" y="9" width="15" height="12" fill="none" stroke="#1f78cc" stroke-width="1.500" /><path d="M122 12h12M122 15h12" stroke="#1f78cc" stroke-width="1.500" stroke-dasharray="2 1" /><path d="M124 18h7" stroke="#1f78cc" stroke-width="1.500" />
        <circle cx="149" cy="11" r="3.500" fill="#b8c2cc" /><path d="M143 21c0-8 12-8 12 0z" fill="#b8c2cc" /><rect x="148" y="16" width="12" height="7" fill="#fff" stroke="#b8c2cc" /><path d="M150 18h3v2h-3v2h3M155 18h3v2h-3v2h3" fill="none" stroke="#b8c2cc" />
        <path d="M164 11l4-3c2 2 4 2 6 0l4 3-2 4h-2v7h-6v-7h-2z" fill="#1f78cc" />
        <path d="M187 21l7-7c-1-4 2-6 5-5l-3 3 2 2 3-3c1 4-2 6-5 5l-7 7z" fill="#1f78cc" stroke="#1f78cc" />
      </svg>
    </div>
    <div class="ball">72</div>
  </div>
</template>

<style>
html, body { margin: 0; background: #f0f0f0; }
</style>

<style scoped>
.app {
  position: relative; display: flex; flex-direction: column; height: 100vh; overflow: hidden;
  font: 12px/16px "Open Sans", "Noto Sans CJK SC", sans-serif; color: #111; background: #f0f0f0;
}
.app * { box-sizing: border-box; }
button, input, select { font: inherit; color: inherit; }
button { border: 0; background: none; padding: 0; margin: 0; white-space: nowrap; }
ul { list-style: none; margin: 0; padding: 0; }
svg { display: block; flex: none; }
.ic { width: 16px; height: 16px; }
.caret { flex: none; width: 7px; height: 4px; background: #111; clip-path: polygon(8% 0, 92% 0, 50% 100%); }
.more { width: 8px; height: 7px; fill: none; stroke: #111; stroke-width: 1.500; margin-left: auto; }
.off { color: #8b8b8b; }
.off .caret { background: #777; }
.sep { width: 1px; height: 16px; background: #bdbdbd; flex: none; }

.title { display: flex; align-items: center; height: 23px; flex: none; background: #fff; padding-left: 2px; gap: 6px; }
.logo { width: 16px; height: 16px; }
.title h1 { font: 12px/16px Inter, "Noto Sans CJK SC", sans-serif; color: #8c8c8c; margin: 0; flex: 1; white-space: nowrap; }
.winctl { display: flex; gap: 34px; padding-right: 19px; }
.winctl svg { width: 12px; height: 12px; }

.menubar { display: flex; height: 30px; flex: none; }
.menus { display: flex; align-items: center; gap: 11px; padding-left: 7px; width: 937px; flex: none; }
.withicon { display: flex; align-items: center; gap: 3px; }
.wide { margin-left: 5px; }
.notice { width: 188px; flex: none; background: #f7f7f7; color: #3c6a10; display: flex; align-items: center; justify-content: center; border-radius: 3px; }
.account { flex: 1; display: flex; align-items: center; gap: 6px; padding: 0 4px; margin-left: 1px; background: #f7f7f7; border-radius: 3px; }
.bean { margin-left: 2px; }
.account .more, .main .more { align-self: flex-start; margin-top: 5px; }

.toolbar { display: flex; align-items: center; flex: none; }
.toolbar.main { height: 30px; align-items: stretch; gap: 4px; background: #f0f0f0; }
.seg { display: flex; align-items: center; gap: 7px; background: linear-gradient(#fafafa, #f0f0f0); padding: 0 4px; border-radius: 3px; }
.files { width: 149px; padding-right: 1px; flex: none; }
.files button { display: flex; align-items: center; gap: 5px; }
.draws { width: 545px; flex: none; padding-right: 1px; }
.views { flex: 1; padding-left: 3px; }
.views .sep { margin: 0 -1px; }
.tall { height: 24px; }
.tool { display: flex; align-items: center; gap: 4px; flex: none; }
.tool .caret { margin-left: 1px; }
.tight .caret { margin-left: -2px; }
.dim2 { border: 1px solid #707070; height: 22px; width: 62px; padding-left: 2px; margin-right: -3px; }

.body { display: flex; flex: 1; min-height: 0; }
.nav { width: 170px; flex: none; display: flex; flex-direction: column; padding-right: 1px; border-right: 1px solid #9a9a9a; }
.navhead { height: 15px; margin-bottom: 2px; border: 1px solid #8a8a8a; border-left: 0; display: flex; align-items: center; justify-content: space-between; font-size: 13px; line-height: 14px; flex: none; }
.navhead svg { width: 30px; height: 12px; }
.mod { height: 22px; border: 1px solid #a0a0a0; border-left-color: #c8c8c8; flex: none; margin-left: 1px; padding-top: 2px; }
.mod + .mod { margin-bottom: 1px; border-top: 0; }
.mod:last-child { margin-bottom: 0; }
.pm { height: 27px; flex: none; background: linear-gradient(#fdfdfd, #efefef); padding: 7px 6px; }
.pm svg { width: 40px; height: 16px; }
.treebox { flex: 1; min-height: 0; display: flex; background: #fff; border: 2px solid #828790; border-right-width: 1px; border-top-width: 1px; margin: 0 1px 1px 2px; padding: 1px 2px 1px 0; }
.tree { flex: 1; overflow: hidden; }
.tree, .list, .status, .dstatus, table { font-family: "Noto Sans CJK SC", sans-serif; font-feature-settings: "hwid"; }
.node, .root { display: flex; align-items: center; height: 16px; padding-left: 6px; gap: 5px; white-space: nowrap; }
.chev { width: 10px; height: 10px; }
.leaf {
  height: 16px; padding-left: 40px;
  background:
    repeating-linear-gradient(#888 0 1px, transparent 1px 2px) 11px 0 / 1px 100% no-repeat,
    repeating-linear-gradient(#888 0 1px, transparent 1px 2px) 30px 0 / 1px 100% no-repeat,
    repeating-linear-gradient(90deg, #888 0 1px, transparent 1px 2px) 30px 8px / 10px 1px no-repeat;
}
.pick { display: inline-flex; align-items: center; height: 16px; padding: 0 5px 0 2px; gap: 4px; vertical-align: top; white-space: nowrap; }
.pick.on { background: #d9d9d9; }
.sb { width: 16px; flex: none; background: #f0f0f0; display: flex; flex-direction: column; align-items: center; }
.sb svg { width: 10px; height: 17px; fill: none; stroke: #505050; stroke-width: 1.800; }
.sb i { width: 100%; background: #cdcdcd; }
.sb svg:last-child { margin-top: auto; }
.t1 { height: 88%; }
.t2 { height: 58%; }
.t3 { height: 55%; }

.work { flex: 1; min-width: 0; display: flex; flex-direction: column; padding-left: 5px; }
.edit { height: 28px; gap: 7px; padding-left: 4px; background: linear-gradient(#fbfbfb, #f2f2f2); }
.edit .sep { margin: 0 -2px; }
.floor { display: flex; align-items: center; gap: 5px; }
.selwrap { display: grid; align-items: center; }
.selwrap > * { grid-area: 1 / 1; }
.selwrap .caret { justify-self: end; margin-right: 4px; pointer-events: none; }
select { appearance: none; border: 0; border-radius: 0; outline: 0; background: #fff; width: 60px; height: 22px; padding: 0 2px; }
.find { border: 1px solid #3c8fdc; background: #b5d7f3; height: 24px; padding: 0 3px 0 4px; }

.panes { flex: 1; min-height: 0; display: flex; }
.members { width: 184px; flex: none; display: flex; flex-direction: column; padding-top: 5px; border-right: 1px solid #999; }
.search { display: flex; height: 26px; background: #fff; flex: none; }
.search input { width: 158px; height: 24px; border: 1px solid #7a7a7a; padding: 0 0 4px 2px; outline: 0; background: #fff; }
.search input::placeholder { color: #777; opacity: 1; }
.search button { padding: 0 6px; }
.search svg { width: 14px; height: 14px; }
.listbox { flex: 1; min-height: 0; display: flex; background: #fff; border: 1px solid #828790; border-width: 2px 1px 1px; padding: 0 1px 1px 0; }
.list { flex: 1; overflow: hidden; }
.root { gap: 6px; padding-left: 7px; }
.kz {
  height: 16px; padding-left: 40px;
  background:
    repeating-linear-gradient(#888 0 1px, transparent 1px 2px) 31px 0 / 1px 100% no-repeat,
    repeating-linear-gradient(90deg, #888 0 1px, transparent 1px 2px) 31px 8px / 11px 1px no-repeat;
}
.kzpick { display: inline-flex; align-items: center; height: 16px; padding: 0 4px; gap: 8px; vertical-align: top; white-space: nowrap; }
.kzpick.on { background: #316ac5; }
.gear { width: 11px; height: 11px; }

.props { flex: 1; min-width: 0; display: flex; flex-direction: column; padding: 0 6px 1px 3px; }
.tabs { height: 21px; flex: none; display: flex; background: #fff; border-left: 1px solid #d4d4d4; }
.tab { width: 64px; border-right: 1px solid #d4d4d4; background: #fff; padding-top: 2px; }
.sheet { flex: 1; min-height: 0; background: #fff; border: 1px solid #d9d9d9; border-width: 0 1px 1px; display: flex; padding: 4px 2px 2px; }
.tablewrap { flex: 1; min-width: 0; border: 1px solid #a0a0a0; display: flex; align-items: stretch; padding: 1px; }
table { flex: 1; align-self: flex-start; border-collapse: collapse; table-layout: fixed; width: 100%; }
.c1 { width: 21px; }
.c2 { width: 191px; }
th, td { border: 1px solid #c0c0c0; border-left: 0; font-weight: normal; padding: 0; height: 19px; line-height: 18px; white-space: nowrap; overflow: hidden; text-align: left; }
thead th { height: 22px; background: linear-gradient(#fff, #ededed); text-align: center; border-top: 0; }
thead th.val { background: linear-gradient(#fbdca4, #f0bc58); }
tbody th { background: #f3f3f3; text-align: center; }
td:nth-child(2) { padding-left: 19px; }
td:nth-child(3) { padding-left: 2px; }
.head th { background: #fdd28a; color: #5a1050; }
.head td { background: #0078d7; color: #fff; }
.head td:last-child { background: #d9e9fa; color: #111; }
.blue td:nth-child(2) { color: #0000f0; }
.grey td, .group td { color: #858585; }
.group td:nth-child(2) { padding-left: 2px; }
.plus { width: 13px; height: 13px; border: 1px solid #a0a0a0; padding: 1px; margin-right: 4px; vertical-align: -1px; }
.plus svg { width: 9px; height: 9px; }

.status { display: flex; gap: 2px; height: 23px; padding-top: 3px; flex: none; line-height: 16px; }
.status span, .dstatus span { border: 1px solid #d5d5d5; background: linear-gradient(#fdfdfd, #f0f0f0); padding: 1px; white-space: nowrap; overflow: hidden; }
.s1 { width: 148px; } .s2 { width: 78px; } .s3 { width: 97px; } .s4 { width: 48px; } .s5 { flex: 1; } .s6 { width: 70px; }

.taskbar { height: 40px; flex: none; display: flex; background: #020c10; color: #eee; }
.start { width: 48px; background: #000; display: grid; place-items: center; }
.start svg { width: 16px; height: 16px; }
.cortana { width: 344px; background: #333; display: flex; align-items: center; padding: 0 14px 0 8px; gap: 6px; }
.cortana svg { width: 22px; height: 22px; }
.cortana .mic { width: 12px; height: 18px; }
.cortana input { flex: 1; min-width: 0; background: none; border: 0; padding: 0; font-size: 14px; outline: 0; }
.cortana input::placeholder { color: #9a9a9a; opacity: 1; }
.pins, .runs { display: flex; flex: none; }
.pins button, .runs button { display: grid; place-items: center; }
.pins button { width: 51px; }
.runs button { width: 48px; }
.pins svg, .runs svg { width: 24px; height: 24px; }
.runs .run { box-shadow: inset 0 -3px #79b4ec; background-clip: content-box; width: 46px; margin: 0 1px; }
.runs .active { background: #3b4449; }
.tray { flex: 1; display: flex; align-items: center; line-height: 18px; font-size: 12px; }
.link { margin-left: auto; width: 24px; margin-right: 18px; }
.cpu { width: 50px; text-align: center; margin-right: 11px; white-space: nowrap; }
.tray svg { height: 20px; }
.w24 { width: 24px; } .w26 { width: 26px; } .w30 { width: 30px; }
.zh { text-align: center; font-size: 14px; }
.clock { width: 80px; text-align: center; }
.tray .note { width: 34px; height: 34px; margin-right: 16px; }

.dialog { position: absolute; left: 589px; top: 132px; right: 22px; bottom: 65px; display: flex; flex-direction: column; border: 1px solid #333; background: #b9d1ea; box-shadow: inset 0 0 0 1px #7fc4e4; padding: 0 7px 8px; }
.dialog h2 { margin: 1px -6px 0; padding: 10px 6px 0; height: 30px; font: inherit; background: linear-gradient(#99b4d1, #b9d1ea); flex: none; }
.dlgbody { flex: 1; min-height: 0; display: flex; flex-direction: column; background: #f0f0f0; }
.dtabs { display: flex; align-items: flex-end; height: 20px; padding-left: 2px; flex: none; }
.dtabs button { width: 47px; height: 19px; border: 1px solid #d9d9d9; border-bottom: 0; padding: 2px 12px 0 0; }
.dtabs .on { width: 50px; height: 21px; background: #fff; padding: 0 12px 0 0; }
.page { flex: 1; min-height: 0; display: flex; flex-direction: column; background: #fff; border: 1px solid #d9d9d9; margin: 0 3px 3px 0; padding: 2px 0 2px 4px; }
.dbar { display: flex; align-items: center; gap: 10px; height: 27px; flex: none; background: linear-gradient(#fcfcfc, #f0f0f0); padding-left: 3px; }
.second { height: 30px; gap: 6px; padding-bottom: 2px; color: #777; background: #f0f0f0; }
.dbar .sep { margin: 0 -3px 0 -2px; }
.grip { width: 2px; height: 14px; background: repeating-linear-gradient(#b8b8b8 0 2px, transparent 2px 4px); }
.dbar:not(.second) .grip { margin-right: -3px; }
.dbar label { display: flex; align-items: center; gap: 2px; }
.dbar select { width: 133px; height: 23px; border: 1px solid #777; background: #f3f3f3; }
.dbar .caret { background: #777; }
.canvas { flex: 1; min-height: 0; border: 2px solid #f00; background: #000; margin-right: 1px; display: flex; }
.canvas svg { width: 100%; height: 100%; }
.num { font: 22px "Liberation Serif", serif; fill: #fff; }
.origin { font: 10px "Liberation Serif", serif; fill: #444; }
.note-text { font: 21px "Noto Sans CJK SC", sans-serif; font-feature-settings: "hwid"; fill: #fff; }
.g { font-size: 22px; fill: #0e0; }
.dstatus { display: flex; gap: 2px; height: 20px; flex: none; margin: 0 1px; }
.dstatus .d1 { width: 148px; padding-left: 6px; }
.dstatus .d2 { flex: 1; display: flex; justify-content: flex-end; align-items: flex-end; }
.d2 svg { width: 12px; height: 12px; }

.ime { position: absolute; left: 649px; top: 33px; width: 207px; height: 28px; }
.ime svg { width: 206px; height: 28px; background: linear-gradient(#fff, #fff) 10px 3px / 196px 24px no-repeat; filter: drop-shadow(0 0 1px #8fb5da); }
.ball { position: absolute; right: 123px; top: -29px; width: 48px; height: 48px; border-radius: 50%; background: #3cc465; border: 2px solid #d5dcd8; box-shadow: 0 2px 4px #999; color: #fff; font-weight: bold; font-size: 13px; text-align: center; padding-top: 25px; }
</style>
